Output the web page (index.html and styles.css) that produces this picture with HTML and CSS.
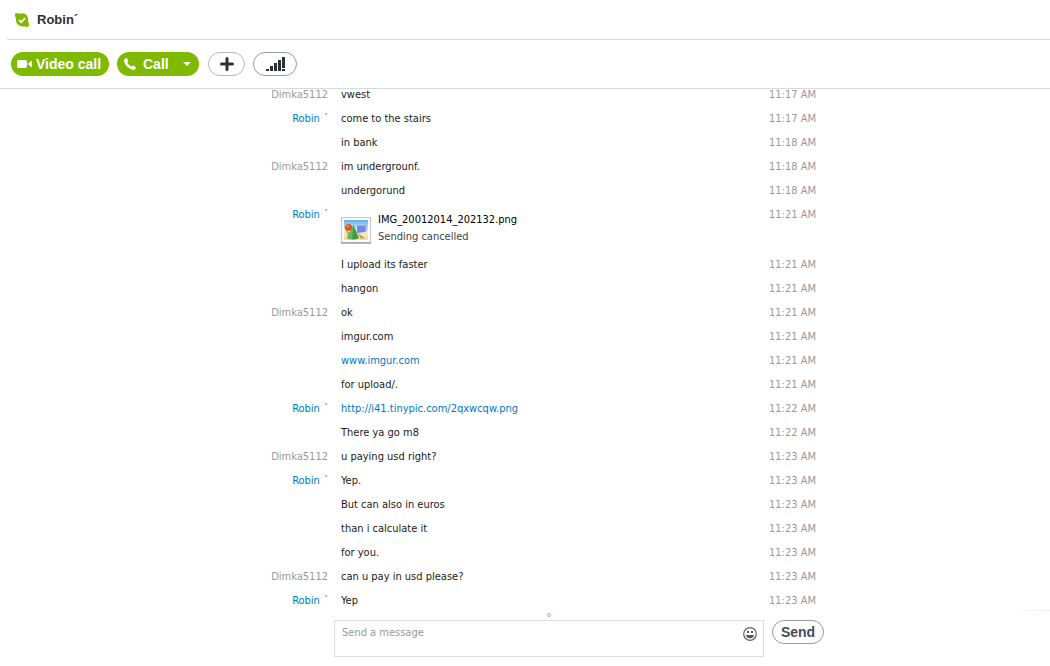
FILE: index.html
```html
<!DOCTYPE html>
<html lang="en">
<head>
<meta charset="utf-8">
<meta name="viewport" content="width=device-width, initial-scale=1">
<title>Robin´</title>
<link rel="stylesheet" href="styles.css">
</head>
<body>
<header class="contact">
  <svg class="status" viewBox="0 0 14 14" aria-hidden="true"><path d="M1 0C2.500-.2 3.600.6 4.600.8 6.500-.3 8.800.1 10.600 1.200 12.600 2.600 13.400 4.800 13 7.300 13.100 8.800 14.200 10 14 12 13.500 14.200 11.200 14.400 9.600 13.200 7.500 13.700 5 13.200 3.200 11.800 1.300 10.200.7 8.200 1 6 .9 4.500-.2 3.500 0 1.500.1.700.5.200 1 0Z" fill="#7fba00"/><path d="M4.200 7.200 6.300 9.200 10 5" fill="none" stroke="#fff" stroke-width="1.800"/></svg>
  <h1 class="contact-name">Robin´</h1>
</header>
<div class="toolbar">
  <button class="pill video" type="button">
    <svg class="cam" viewBox="0 0 16 10" aria-hidden="true"><rect x="0" y="1" width="10" height="8" rx="2" fill="#fff"/><path d="M11 4.500 15 1.500V8.500L11 5.500Z" fill="#fff"/></svg>
    Video call
  </button>
  <button class="pill call" type="button">
    <svg class="phone" viewBox="0 0 12 12" aria-hidden="true"><path d="M.3 1.300 2.300 0Q3 0 3.300.7L4.200 2.800Q4.400 3.500 3.800 4L3.200 4.600Q4.500 7.200 7.300 8.600L8 7.900Q8.500 7.500 9.200 7.800L11.300 8.700Q12 9 12 9.800L10.800 11.600Q9.500 12.300 7.500 11.500 2.500 9.500.4 4.500-.3 2.500.3 1.300Z" fill="#fff"/></svg>
    Call
    <svg class="caret" viewBox="0 0 8 4" aria-hidden="true"><path d="M0 0H8L4 4Z" fill="#fff"/></svg>
  </button>
  <button class="pill outline add" type="button" aria-label="Add people">
    <svg class="plus" viewBox="0 0 14 14" aria-hidden="true"><path d="M7 1.500V12.500M1.500 7H12.500" stroke="#2e3038" stroke-width="3" stroke-linecap="round"/></svg>
  </button>
  <button class="pill outline signal" type="button" aria-label="Call quality">
    <svg class="bars" viewBox="0 0 19 14" aria-hidden="true"><path d="M0 12H3V14H0ZM4 9H7V14H4ZM8 6H11V14H8ZM12 3H15V14H12ZM16 0H19V11H16ZM16 12H19V14H16Z" fill="#2e3038"/></svg>
  </button>
</div>
<main class="conversation">
  <ol class="log">
    <li class="row"><span class="who">Dimka5112</span><span class="text">vwest</span><time>11:17 AM</time></li>
    <li class="row"><span class="who me">Robin ´</span><span class="text">come to the stairs</span><time>11:17 AM</time></li>
    <li class="row"><span class="text">in bank</span><time>11:18 AM</time></li>
    <li class="row"><span class="who">Dimka5112</span><span class="text">im undergrounf.</span><time>11:18 AM</time></li>
    <li class="row"><span class="text">undergorund</span><time>11:18 AM</time></li>
    <li class="row"><span class="who me">Robin ´</span>
      <div class="text file">
        <svg class="thumb" viewBox="0 0 30 27" aria-hidden="true">
          <defs><linearGradient id="sky" x1="0" y1="0" x2="0" y2="1"><stop offset="0" stop-color="#65aee8"/><stop offset=".5" stop-color="#d9eff8"/><stop offset=".6" stop-color="#f5edb8"/><stop offset="1" stop-color="#eee08c"/></linearGradient></defs>
          <rect x=".5" y=".5" width="29" height="25" fill="#fcfcfc" stroke="#c6c6c6"/><path d="M0 26H30" stroke="#a0a0a0" stroke-width="1.500"/>
          <rect x="3" y="3" width="24" height="20" fill="url(#sky)"/>
          <path d="M16 9 24 8V15L16 16Z" fill="#7388df"/><path d="M16 9 18 8H26V14L24 15V9Z" fill="#9caef0"/>
          <path d="M5 14Q9 14 10 19L8 21Z" fill="#b6a86a"/><circle cx="7.500" cy="10.500" r="3.600" fill="#d95a20"/><circle cx="6.500" cy="9.200" r="1.300" fill="#f08a50"/>
          <path d="M17 16 24 21 20 22Z" fill="#b6a86a"/><path d="M12.500 8 18 21Q12 24 6 21Z" fill="#3f9a45"/><path d="M12.500 8 11 22 6 21Z" fill="#68b85a"/>
        </svg>
        <div class="file-info"><span class="file-name">IMG_20012014_202132.png</span><span class="file-state">Sending cancelled</span></div>
      </div><time>11:21 AM</time></li>
    <li class="row"><span class="text">I upload its faster</span><time>11:21 AM</time></li>
    <li class="row"><span class="text">hangon</span><time>11:21 AM</time></li>
    <li class="row"><span class="who">Dimka5112</span><span class="text">ok</span><time>11:21 AM</time></li>
    <li class="row"><span class="text">imgur.com</span><time>11:21 AM</time></li>
    <li class="row"><a class="text link" href="http://www.imgur.com">www.imgur.com</a><time>11:21 AM</time></li>
    <li class="row"><span class="text">for upload/.</span><time>11:21 AM</time></li>
    <li class="row"><span class="who me">Robin ´</span><a class="text link" href="http://i41.tinypic.com/2qxwcqw.png">http://i41.tinypic.com/2qxwcqw.png</a><time>11:22 AM</time></li>
    <li class="row"><span class="text">There ya go m8</span><time>11:22 AM</time></li>
    <li class="row"><span class="who">Dimka5112</span><span class="text">u paying usd right?</span><time>11:23 AM</time></li>
    <li class="row"><span class="who me">Robin ´</span><span class="text">Yep.</span><time>11:23 AM</time></li>
    <li class="row"><span class="text">But can also in euros</span><time>11:23 AM</time></li>
    <li class="row"><span class="text">than i calculate it</span><time>11:23 AM</time></li>
    <li class="row"><span class="text">for you.</span><time>11:23 AM</time></li>
    <li class="row"><span class="who">Dimka5112</span><span class="text">can u pay in usd please?</span><time>11:23 AM</time></li>
    <li class="row"><span class="who me">Robin ´</span><span class="text">Yep</span><time>11:23 AM</time></li>
  </ol>
</main>
<footer class="footer">
  <div class="grip"></div>
  <form class="composer">
    <div class="field">
      <textarea class="message" rows="1" placeholder="Send a message" aria-label="Send a message"></textarea>
      <button class="emoji" type="button" aria-label="Emoticons">
        <svg class="smile" viewBox="0 0 14 14" aria-hidden="true"><circle cx="7" cy="7" r="6.300" fill="none" stroke="#62626c" stroke-width="1.200"/><rect x="4" y="4" width="2" height="2" fill="#55555f"/><rect x="8" y="4" width="2" height="2" fill="#55555f"/><path d="M3 8H11Q10.500 11.300 7 11.300T3 8Z" fill="#55555f"/></svg>
      </button>
    </div>
    <button class="pill outline send" type="submit">Send</button>
  </form>
</footer>
</body>
</html>
```
FILE: styles.css
```css
* { box-sizing: border-box; }

body {
  display: flex;
  flex-direction: column;
  height: 100vh;
  margin: 0;
  background: #fff;
  color: #1a1a1a;
  font: 11px/24px "DejaVu Sans Condensed", "Noto Sans", sans-serif;
}

button { padding: 0; border: 0; background: none; cursor: pointer; }
svg { display: block; flex: none; }

.contact {
  display: flex;
  align-items: center;
  gap: 8px;
  height: 40px;
  margin-left: 7px;
  padding-left: 8px;
  border-bottom: 1px solid #d9d9d9;
}
.status { width: 14px; height: 14px; }
.contact-name { margin: 0; color: #2e3038; font: bold 13px/20px "Liberation Sans", sans-serif; }

.toolbar {
  display: flex;
  align-items: center;
  height: 49px;
  padding-left: 11px;
  border-bottom: 1px solid #d9d9d9;
}
.pill {
  display: flex;
  align-items: center;
  height: 24px;
  border-radius: 12px;
  background: #7fba00;
  color: #fff;
  font: bold 14px/24px "Liberation Sans", sans-serif;
  white-space: nowrap;
}
.video { gap: 3px; width: 98px; margin-right: 8px; padding-left: 6px; }
.cam { width: 16px; height: 10px; }
.call { gap: 7px; width: 82px; margin-right: 9px; padding: 0 8px 0 7px; }
.phone { width: 12px; height: 12px; }
.caret { width: 8px; height: 4px; margin-left: auto; }
.outline { justify-content: center; border: 1px solid #979ba1; background: #fff; color: #444c58; }
.add { width: 37px; margin-right: 8px; border-color: #b3b5b9; }
.plus { width: 14px; height: 14px; }
.signal { width: 44px; }
.bars { width: 19px; height: 14px; }

.conversation {
  display: flex;
  flex: 1;
  flex-direction: column;
  justify-content: flex-end;
  min-height: 0;
  padding-left: 48px;
  overflow: hidden;
}
.log { width: 100%; max-width: 556px; margin: 0 auto; padding: 0 11px 0 0; list-style: none; }
.row { display: grid; grid-template-columns: 57px 1fr auto; column-gap: 13px; }
.who { grid-column: 1; color: #999; text-align: right; white-space: nowrap; }
.me, .link { color: #0078ca; }
.text { grid-column: 2; justify-self: start; }
.link { text-decoration: none; }
time { grid-column: 3; color: #999; }

.file { display: flex; gap: 7px; height: 50px; padding-top: 8px; }
.thumb { width: 30px; height: 27px; margin-top: 6px; }
.file-info { display: flex; flex-direction: column; line-height: 17px; }
.file-name { color: #000; }
.file-state { color: #444; }

.footer {
  position: relative;
  height: 53px;
  padding-left: 48px;
}
.footer::after {
  content: "";
  position: absolute;
  top: -3px;
  right: 0;
  width: 46px;
  height: 1px;
  background: linear-gradient(to right, #fff, #eee);
}
.grip {
  width: 4px;
  height: 4px;
  margin: 0 auto 3px;
  border: 1px solid #8fc0d2;
  border-radius: 2px;
}
.composer { display: flex; gap: 8px; width: 100%; max-width: 552px; margin: 0 auto; padding: 0 1px 0 61px; }
.field { display: flex; flex: 1; align-items: flex-start; height: 37px; border: 1px solid #dedede; }
.message {
  flex: 1;
  min-width: 0;
  height: 35px;
  padding: 4px 7px;
  border: 0;
  outline: 0;
  background: none;
  color: #1a1a1a;
  font: inherit;
  line-height: 16px;
  resize: none;
}
.message::placeholder { color: #999; }
.emoji { margin: 6px 6px 0; }
.smile { width: 14px; height: 14px; }
.send { width: 52px; }
```
